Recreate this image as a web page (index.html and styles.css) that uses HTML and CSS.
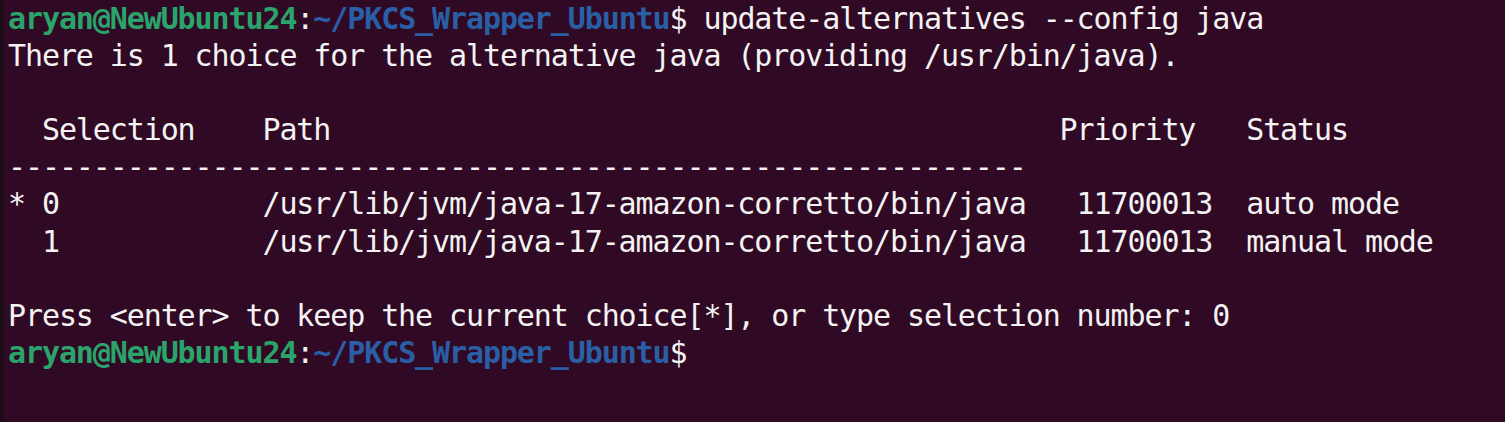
FILE: index.html
```html
<!DOCTYPE html>
<html lang="en">
<head>
<meta charset="utf-8">
<title>Terminal</title>
<link rel="stylesheet" href="styles.css">
</head>
<body>
<div class="terminal">
<div class="edge-tab"></div>
<pre class="screen"><span class="user">aryan@NewUbuntu24</span>:<span class="path">~/PKCS_Wrapper_Ubuntu</span>$ update-alternatives --config java
There is 1 choice for the alternative java (providing /usr/bin/java).

  Selection    Path                                           Priority   Status
------------------------------------------------------------
* 0            /usr/lib/jvm/java-17-amazon-corretto/bin/java   11700013  auto mode
  1            /usr/lib/jvm/java-17-amazon-corretto/bin/java   11700013  manual mode

Press &lt;enter&gt; to keep the current choice[*], or type selection number: 0
<span class="user">aryan@NewUbuntu24</span>:<span class="path">~/PKCS_Wrapper_Ubuntu</span>$
</pre>
</div>
</body>
</html>
```

FILE: styles.css
```css
html, body {
  margin: 0;
  padding: 0;
  background: #300a24;
}

.terminal {
  position: relative;
  width: 1505px;
  height: 422px;
  box-sizing: border-box;
  border-left: 4px solid #1e0b18;
  padding-left: 4px;
  background: #300a24;
  overflow: hidden;
}

.edge-tab {
  position: absolute;
  left: -4px;
  top: 186px;
  width: 3px;
  height: 56px;
  background: #5a4a54;
  border-radius: 0 2px 2px 0;
}

.screen {
  margin: 0;
  padding-top: 0;
  font-family: "DejaVu Sans Mono", "Liberation Mono", monospace;
  font-size: 30px;
  letter-spacing: -1.1px;
  line-height: 37.1px;
  color: #f4f2f3;
  white-space: pre;
}

.user {
  color: #2aa46b;
  font-weight: bold;
}

.path {
  color: #2a5fa6;
  font-weight: bold;
}
```
